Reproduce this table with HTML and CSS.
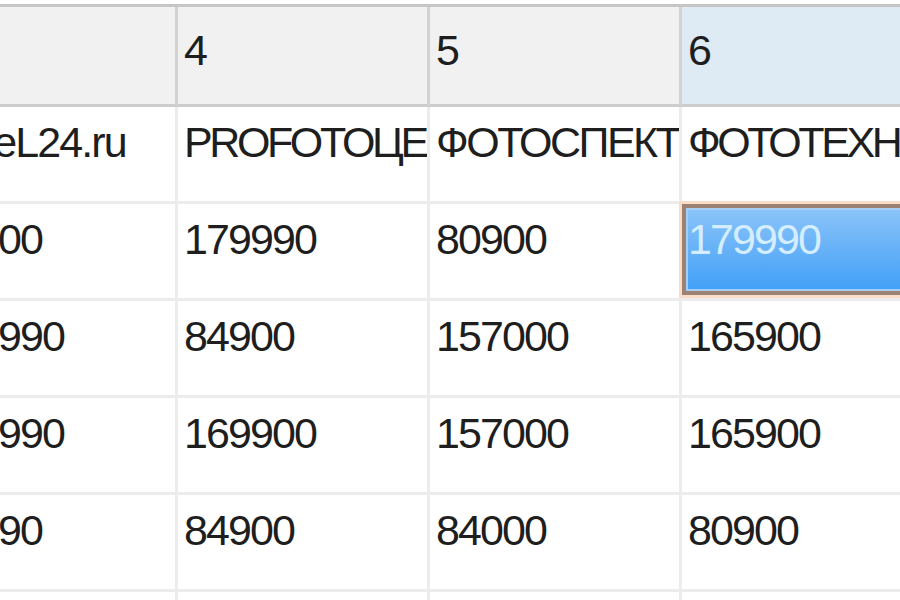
FILE: index.html
```html
<!DOCTYPE html>
<html lang="ru">
<head>
<meta charset="utf-8">
<title>Таблица цен</title>
<link rel="stylesheet" href="styles.css">
</head>
<body>
<div class="page">
  <div class="sheet">
    <div class="cell head first"></div>
    <div class="cell head">4</div>
    <div class="cell head">5</div>
    <div class="cell head active">6</div>

    <div class="cell first">HoteL24.ru</div>
    <div class="cell word">PROFOTOЦЕНТР</div>
    <div class="cell word wide">ФОТОСПЕКТР</div>
    <div class="cell word">ФОТОТЕХНИКА</div>

    <div class="cell first">82900</div>
    <div class="cell">179990</div>
    <div class="cell">80900</div>
    <div class="cell sel"><div class="sel-box">179990</div></div>

    <div class="cell first">169990</div>
    <div class="cell">84900</div>
    <div class="cell">157000</div>
    <div class="cell">165900</div>

    <div class="cell first">179990</div>
    <div class="cell">169900</div>
    <div class="cell">157000</div>
    <div class="cell">165900</div>

    <div class="cell first">89990</div>
    <div class="cell">84900</div>
    <div class="cell">84000</div>
    <div class="cell">80900</div>

    <div class="cell first"></div>
    <div class="cell"></div>
    <div class="cell"></div>
    <div class="cell"></div>
  </div>
</div>
</body>
</html>
```
FILE: styles.css
```css
html, body {
  margin: 0;
  padding: 0;
  background: #ffffff;
  overflow: hidden;
}

.page {
  width: 900px;
  height: 600px;
  overflow: hidden;
  padding-top: 4px;
  box-sizing: border-box;
}

.sheet {
  display: grid;
  width: 934px;
  grid-template-columns: 178px 252px 252px 252px;
  grid-template-rows: 100px repeat(5, 97px) 97px;
  border-top: 3px solid #c6c6c6;
  font-family: "Liberation Sans", Arial, sans-serif;
  font-size: 43px;
  line-height: 48px;
  letter-spacing: -1.9px;
  color: #1e1e1e;
}

.cell {
  box-sizing: border-box;
  border-right: 3px solid #ececec;
  border-bottom: 3px solid #ececec;
  padding: 11px 6px 0 6px;
  white-space: nowrap;
  overflow: hidden;
  background: #ffffff;
}

.cell.head {
  background: #f1f1f1;
  border-right-color: #d2d2d2;
  border-bottom-color: #cdcdcd;
  padding-top: 19px;
}

.cell.head.active {
  background: #deeaf4;
}

.cell.first {
  text-indent: -74px;
}

.cell.word {
  letter-spacing: -3.4px;
}

.cell.word.wide {
  letter-spacing: -2.5px;
}

.cell.sel {
  padding: 0;
  overflow: visible;
  position: relative;
  z-index: 1;
}

.sel-box {
  box-sizing: border-box;
  height: 91px;
  border: 4px solid #9c8274;
  box-shadow: 0 0 0 3px #fadcc8, inset 0 0 0 2px #a6cdf2;
  background: linear-gradient(#8cc4f9, #409ff7);
  color: #d4edff;
  padding: 7px 2px 0 2px;
}
```
